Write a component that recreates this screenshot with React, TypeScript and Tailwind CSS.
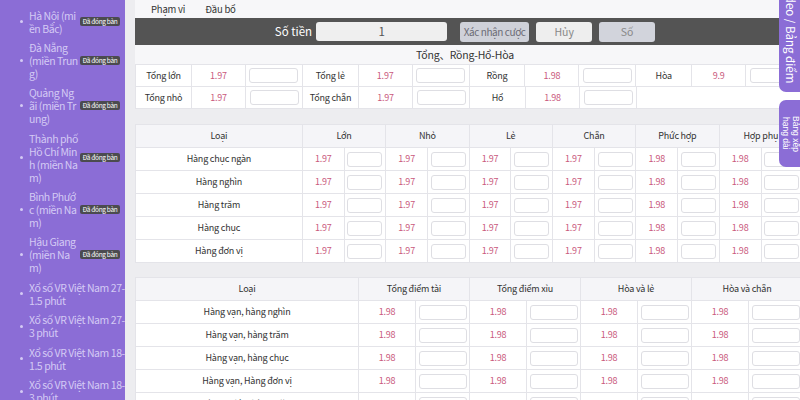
import React from 'react';

const areas = [
  { lines: ['Hà Nội (mi', 'ền Bắc)'], closed: true },
  { lines: ['Đà Nẵng', '(miền Trun', 'g)'], closed: true },
  { lines: ['Quảng Ng', 'ãi (miền Tr', 'ung)'], closed: true },
  { lines: ['Thành phố', 'Hồ Chí Min', 'h (miền Na', 'm)'], closed: true },
  { lines: ['Bình Phướ', 'c (miền Na', 'm)'], closed: true },
  { lines: ['Hậu Giang', '(miền Na', 'm)'], closed: true },
  { lines: ['Xổ số VR Việt Nam 27-', '1.5 phút'], closed: false },
  { lines: ['Xổ số VR Việt Nam 27-', '3 phút'], closed: false },
  { lines: ['Xổ số VR Việt Nam 18-', '1.5 phút'], closed: false },
  { lines: ['Xổ số VR Việt Nam 18-', '3 phút'], closed: false },
];

const sumRows = [
  [['Tổng lớn', '1.97'], ['Tổng lẻ', '1.97'], ['Rồng', '1.98'], ['Hòa', '9.9']],
  [['Tổng nhỏ', '1.97'], ['Tổng chẵn', '1.97'], ['Hổ', '1.98']],
];

const posCols = ['Lớn', 'Nhỏ', 'Lẻ', 'Chẵn', 'Phức hợp', 'Hợp phụ'];
const posOdds = ['1.97', '1.97', '1.97', '1.97', '1.98', '1.98'];
const posRows = ['Hàng chục ngàn', 'Hàng nghìn', 'Hàng trăm', 'Hàng chục', 'Hàng đơn vị'];

const pairCols = ['Tổng điểm tài', 'Tổng điểm xỉu', 'Hòa và lẻ', 'Hòa và chẵn'];
const pairRows = [
  'Hàng vạn, hàng nghìn',
  'Hàng vạn, hàng trăm',
  'Hàng vạn, hàng chục',
  'Hàng vạn, Hàng đơn vị',
  'Hàng nghìn, hàng trăm',
];

function Sidebar() {
  return (
    <aside className="w-[125px] shrink-0 bg-[#8b6dd6] pt-[8.5px] flex flex-col gap-[6.4px] overflow-hidden text-[#d4caf4] text-[10.5px] leading-[13px]">
      {areas.map((a, i) => (
        <div key={i} className="flex items-center">
          <span className="w-[29px] shrink-0 pl-[19.5px]">
            <span className="block w-[3px] h-[3px] rounded-full bg-[#d4caf4]" />
          </span>
          <div className="flex flex-col">
            {a.lines.map((l, j) => (
              <span key={j} className="whitespace-nowrap tracking-[-0.45px]">{l}</span>
            ))}
          </div>
          {a.closed && (
            <span className="ml-auto mr-[5px] w-[40px] h-[9px] shrink-0 overflow-hidden rounded-[2px] bg-[#4b4b4f] text-center text-[6.5px] leading-[9px] tracking-[-0.3px] text-white whitespace-nowrap">
              Đã đóng bàn
            </span>
          )}
        </div>
      ))}
    </aside>
  );
}

function BetInput({ w }: { w: string }) {
  return <div className={`${w} h-[15px] rounded-[3px] border border-[#dedee3] bg-white`} />;
}

function SumTable() {
  return (
    <div className="w-[668px] border-l border-[#e4e4e9] bg-white">
      {sumRows.map((row, ri) => (
        <div key={ri} className="flex h-[22px]">
          {row.map(([label, odds]) => (
            <React.Fragment key={label}>
              <div className="w-[56px] flex items-center justify-center border-r border-b border-[#e4e4e9] text-[#333]">{label}</div>
              <div className="w-[54px] flex items-center justify-center border-r border-b border-[#e4e4e9] text-[#c9587c]">{odds}</div>
              <div className="w-[57px] flex items-center justify-center border-r border-b border-[#e4e4e9]">
                <BetInput w="w-[49px]" />
              </div>
            </React.Fragment>
          ))}
          {row.length < 4 && <div className="flex-1 border-b border-[#e4e4e9]" />}
        </div>
      ))}
    </div>
  );
}

function PosTable() {
  return (
    <div className="mt-[15px] w-[668px] border-l border-t border-[#e4e4e9] bg-white">
      <div className="flex h-[23px] bg-[#f5f5f8]">
        <div className="w-[167px] flex items-center justify-center border-r border-b border-[#e4e4e9]">Loại</div>
        {posCols.map((c) => (
          <div key={c} className="w-[83.5px] flex items-center justify-center border-r border-b border-[#e4e4e9] whitespace-nowrap">{c}</div>
        ))}
      </div>
      {posRows.map((r) => (
        <div key={r} className="flex h-[23px]">
          <div className="w-[167px] flex items-center justify-center border-r border-b border-[#e4e4e9]">{r}</div>
          {posOdds.map((o, i) => (
            <React.Fragment key={i}>
              <div className="w-[42px] flex items-center justify-center border-r border-b border-[#e4e4e9] text-[#c9587c]">{o}</div>
              <div className="w-[41.5px] flex items-center justify-center border-r border-b border-[#e4e4e9]">
                <BetInput w="w-[35px]" />
              </div>
            </React.Fragment>
          ))}
        </div>
      ))}
    </div>
  );
}

function PairTable() {
  return (
    <div className="mt-[14px] w-[668px] border-l border-t border-[#e4e4e9] bg-white">
      <div className="flex h-[23px] bg-[#f5f5f8]">
        <div className="w-[223px] flex items-center justify-center border-r border-b border-[#e4e4e9]">Loại</div>
        {pairCols.map((c) => (
          <div key={c} className="w-[111px] flex items-center justify-center border-r border-b border-[#e4e4e9] whitespace-nowrap">{c}</div>
        ))}
      </div>
      {pairRows.map((r) => (
        <div key={r} className="flex h-[23px]">
          <div className="w-[223px] flex items-center justify-center border-r border-b border-[#e4e4e9]">{r}</div>
          {pairCols.map((c) => (
            <React.Fragment key={c}>
              <div className="w-[57px] flex items-center justify-center border-r border-b border-[#e4e4e9] text-[#c9587c]">1.98</div>
              <div className="w-[54px] flex items-center justify-center border-r border-b border-[#e4e4e9]">
                <BetInput w="w-[48px]" />
              </div>
            </React.Fragment>
          ))}
        </div>
      ))}
    </div>
  );
}

export default function App() {
  return (
    <div className="w-[800px] h-[400px] overflow-hidden flex font-['Noto_Sans_CJK_SC','Noto_Sans',sans-serif] text-[9px] tracking-[-0.2px] text-[#333]">
      <Sidebar />
      <main className="relative flex-1 flex bg-[#ededf0]">
        <div className="flex-1 overflow-hidden pl-[10px]">
          <div className="w-[660px]">
            <div className="h-[18px] bg-[#f7f7f9] flex items-center gap-[20px] pl-[16px] text-[#333] text-[9.5px]">
              <span>Phạm vi</span>
              <span>Đầu bổ</span>
            </div>
            <div className="h-[27px] bg-[#545454] flex items-center justify-center text-[11.5px] tracking-normal">
              <span className="text-white mr-[4px] whitespace-nowrap">Số tiền</span>
              <div className="w-[131px] h-[19px] rounded-[3px] bg-[#efefef] flex items-center justify-center text-[#555]">1</div>
              <button className="ml-[13px] w-[69px] h-[20px] rounded-[3px] bg-[#cfd1d9] text-[#6b6b75] text-[10px] tracking-[-0.4px] whitespace-nowrap">Xác nhận cược</button>
              <button className="ml-[7px] w-[56px] h-[20px] rounded-[3px] bg-[#eeeeee] text-[#888] text-[10.5px]">Hủy</button>
              <button className="ml-[7px] w-[56px] h-[20px] rounded-[3px] bg-[#d2d4dc] text-[#888] text-[10.5px]">Số</button>
            </div>
            <div className="h-[20px] bg-[#f7f7f9] border-b border-[#e4e4e9] flex items-center justify-center text-[10.5px] whitespace-nowrap">
              Tổng、Rồng-Hổ-Hòa
            </div>
          </div>
          <SumTable />
          <PosTable />
          <PairTable />
        </div>
        <div className="w-[6px] shrink-0 bg-[#f1f1f1]">
          <div className="h-[297px] bg-[#a3a3a3] rounded-[3px]" />
        </div>
        <div className="absolute right-[7px] top-[-20px] w-[23px] h-[112px] rounded-bl-[7px] rounded-br-[3px] bg-[#8b6dd6] flex items-end justify-center pb-[9px]">
          <span className="[writing-mode:vertical-rl] text-white text-[11.5px] leading-[14px] tracking-normal whitespace-nowrap">Video / Bảng điểm</span>
        </div>
        <div className="absolute right-[7px] top-[100px] w-[23px] h-[67px] rounded-l-[7px] bg-[#8b6dd6] flex flex-row-reverse items-center justify-center text-white text-[8.5px] tracking-normal font-['Liberation_Sans',sans-serif]">
          <span className="[writing-mode:vertical-rl] leading-[10px] whitespace-nowrap">Bảng xếp</span>
          <span className="[writing-mode:vertical-rl] leading-[10px] whitespace-nowrap">hạng dài</span>
        </div>
      </main>
    </div>
  );
}
